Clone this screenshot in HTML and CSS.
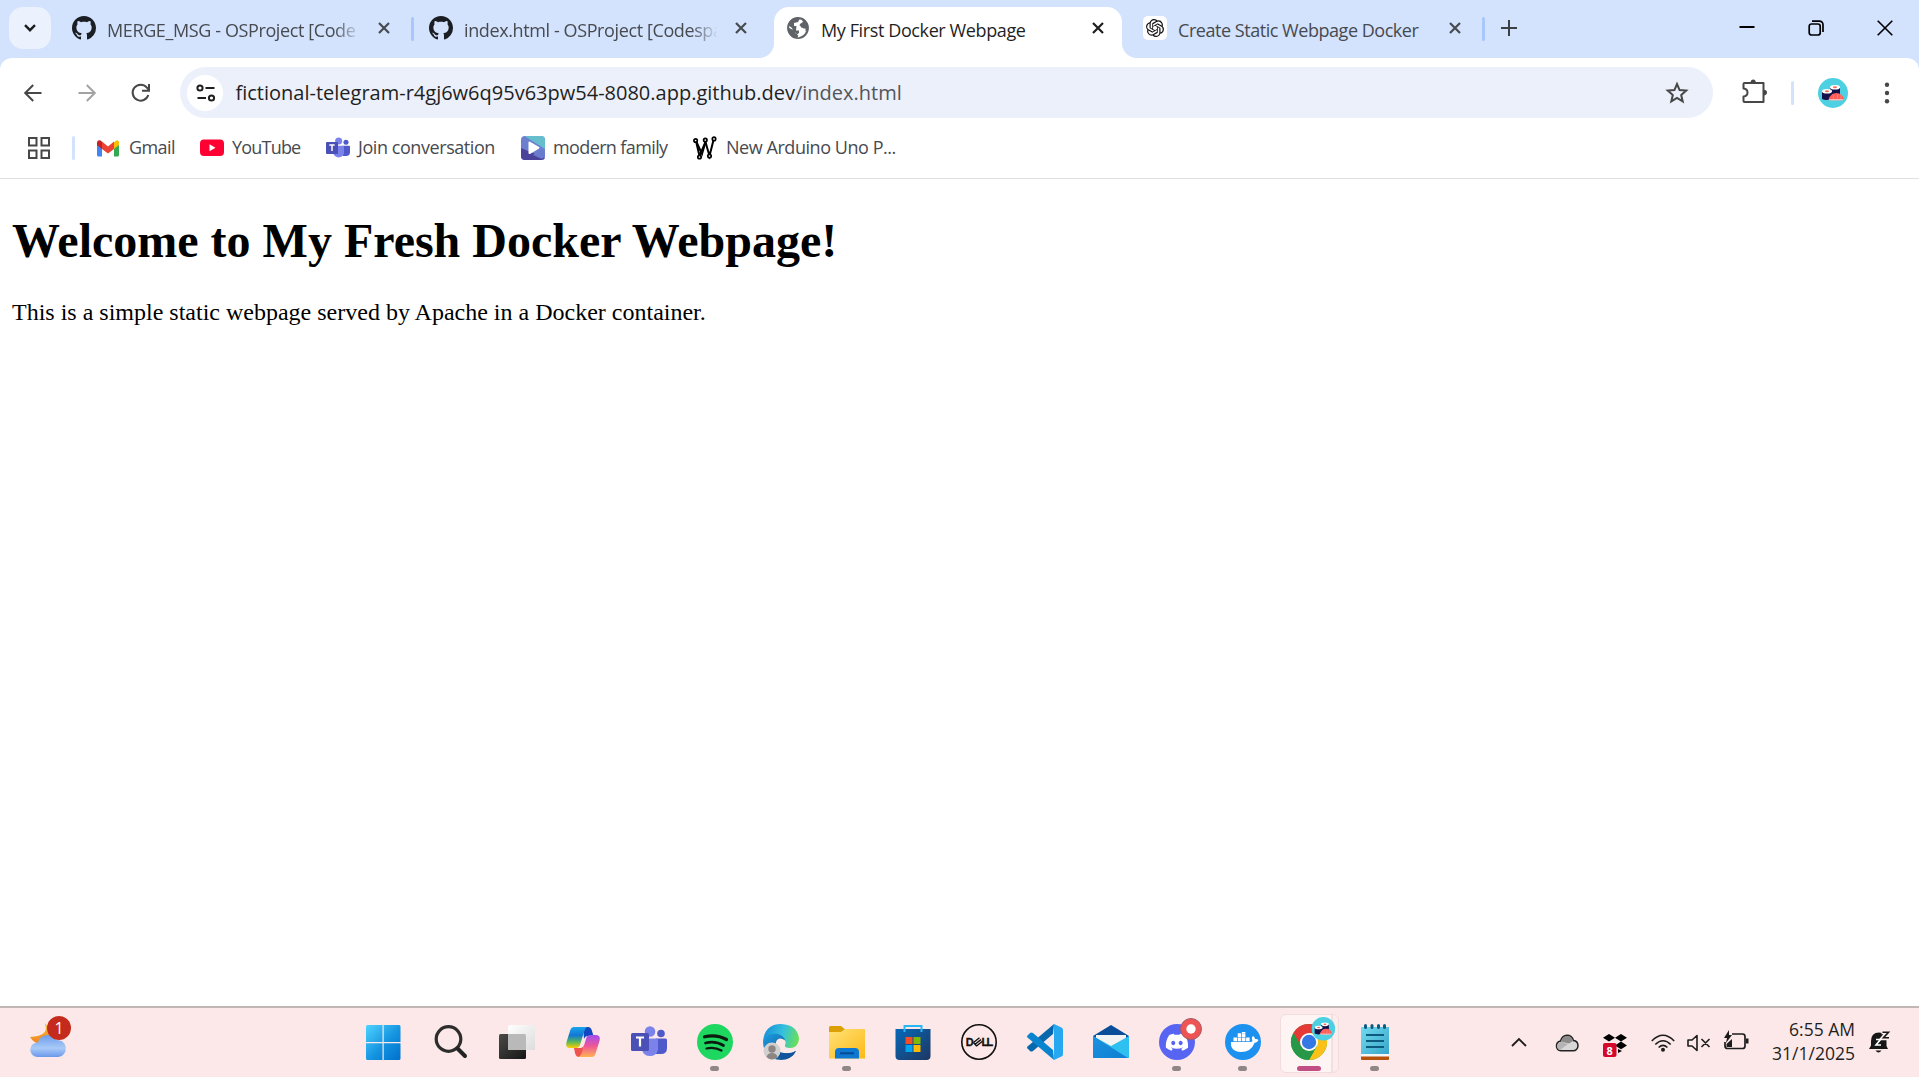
FILE: index.html
```html
<!DOCTYPE html>
<html lang="en">
<head>
<meta charset="utf-8">
<title>My First Docker Webpage</title>
<link rel="stylesheet" href="styles.css">
</head>
<body>
<svg class="defs" width="0" height="0">
  <defs>
    <symbol id="github" viewBox="0 0 16 16"><path fill="#1b1f24" d="M8 0C3.58 0 0 3.58 0 8c0 3.54 2.29 6.53 5.47 7.59.4.07.55-.17.55-.38 0-.19-.01-.82-.01-1.49-2.01.37-2.53-.49-2.69-.94-.09-.23-.48-.94-.82-1.13-.28-.15-.68-.52-.01-.53.63-.01 1.08.58 1.23.82.72 1.21 1.87.87 2.33.66.07-.52.28-.87.51-1.07-1.78-.2-3.64-.89-3.64-3.95 0-.87.31-1.59.82-2.15-.08-.2-.36-1.02.08-2.12 0 0 .67-.21 2.2.82.64-.18 1.32-.27 2-.27s1.36.09 2 .27c1.53-1.04 2.2-.82 2.2-.82.44 1.1.16 1.92.08 2.12.51.56.82 1.27.82 2.15 0 3.07-1.87 3.75-3.65 3.95.29.25.54.73.54 1.48 0 1.07-.01 1.93-.01 2.2 0 .21.15.46.55.38A8.01 8.01 0 0 0 16 8c0-4.42-3.58-8-8-8z"/></symbol>
    <symbol id="close" viewBox="0 0 12 12"><path d="M1 1l10 10M11 1L1 11" fill="none" stroke="currentColor" stroke-width="2.2"/></symbol>
    <symbol id="teams" viewBox="0 0 36 32">
      <circle cx="19" cy="5.5" r="5.3" fill="#7b83eb"/><circle cx="30" cy="7.5" r="3.8" fill="#5059c9"/>
      <path fill="#5059c9" d="M25 12.5h9.5q1.500 0 1.500 1.500v8q0 6-6 6h-5z"/>
      <path fill="#7b83eb" d="M11 12.500h14.500q1.500 0 1.500 1.500v10a8.300 8.300 0 0 1-16 0z"/>
      <rect y="7" width="18" height="18" rx="1.500" fill="#4a50b5"/>
      <path d="M5 11.500h8M9 11.500v9" stroke="#fff" stroke-width="2.200" fill="none"/>
    </symbol>
    <symbol id="sushi" viewBox="0 0 30 30">
      <circle cx="15" cy="15" r="15" fill="#4dd0e1"/>
      <path d="M12 9v7h10V9z" fill="#14104a"/><ellipse cx="17" cy="9.300" rx="5" ry="2.300" fill="#fff"/><ellipse cx="17" cy="9.300" rx="2" ry="1" fill="#f26a52"/>
      <path d="M4 13v8q4 2 10 0v-8z" fill="#14104a"/><ellipse cx="9" cy="13.300" rx="5" ry="2.300" fill="#fff"/><ellipse cx="9" cy="13.300" rx="2" ry="1" fill="#f26a52"/>
      <path d="M10.500 21.500q2-6.500 8-6.500 6 0 7.500 6.500z" fill="#ff5a55"/><path d="M10.500 21h15.500q-1 1.600-4 1.600h-8q-3 0-3.500-1.600z" fill="#fbb5b0"/><path d="M15 21l1-4M19 21l1-5M23 21v-4" stroke="#ff8b84" stroke-width=".8"/>
    </symbol>
    <linearGradient id="gWin" x1="0" y1="0" x2="1" y2="1"><stop offset="0" stop-color="#4fd3ff"/><stop offset=".55" stop-color="#1493e0"/><stop offset="1" stop-color="#0070cc"/></linearGradient>
    <linearGradient id="gCloud" x1="0" y1="0" x2="0" y2="1"><stop offset="0" stop-color="#6f9deb"/><stop offset=".6" stop-color="#a8caf8"/><stop offset="1" stop-color="#6a98ec"/></linearGradient>
    <linearGradient id="gMoon" x1="0" y1="0" x2="0" y2="1"><stop offset="0" stop-color="#f6c338"/><stop offset="1" stop-color="#ee8120"/></linearGradient>
    <linearGradient id="gDark" x1="0" y1="0" x2="1" y2="1"><stop offset="0" stop-color="#4b4a49"/><stop offset="1" stop-color="#161616"/></linearGradient>
    <linearGradient id="gLight" x1="0" y1="0" x2="1" y2="1"><stop offset="0" stop-color="#fff"/><stop offset="1" stop-color="#dcdcdc"/></linearGradient>
    <linearGradient id="gCopA" x1="0" y1="0" x2="0" y2="1"><stop offset="0" stop-color="#18a5ec"/><stop offset=".4" stop-color="#1377d4"/><stop offset=".7" stop-color="#55b65d"/><stop offset="1" stop-color="#ffd000"/></linearGradient>
    <linearGradient id="gCopB" x1="0" y1="0" x2="0" y2="1"><stop offset="0" stop-color="#a04ef0"/><stop offset=".5" stop-color="#ef5797"/><stop offset="1" stop-color="#ffb350"/></linearGradient>
    <linearGradient id="gEdgeTop" x1="0" y1=".3" x2="1" y2=".5"><stop offset="0" stop-color="#168fd8"/><stop offset=".55" stop-color="#35c1de"/><stop offset="1" stop-color="#69e057"/></linearGradient>
    <linearGradient id="gEdgeLow" x1="0" y1="0" x2="1" y2="1"><stop offset="0" stop-color="#1b9de2"/><stop offset="1" stop-color="#114a8b"/></linearGradient>
    <linearGradient id="gFolder" x1="0" y1="0" x2="1" y2="1"><stop offset="0" stop-color="#ffe27a"/><stop offset="1" stop-color="#fdb913"/></linearGradient>
    <linearGradient id="gStore" x1="0" y1="0" x2="1" y2="1"><stop offset="0" stop-color="#0769b9"/><stop offset="1" stop-color="#1e3661"/></linearGradient>
    <linearGradient id="gMail" x1="0" y1="0" x2="1" y2="1"><stop offset="0" stop-color="#1b92df"/><stop offset="1" stop-color="#0f7fd2"/></linearGradient>
    <linearGradient id="gNote" x1="0" y1="0" x2="1" y2="1"><stop offset="0" stop-color="#72daf0"/><stop offset="1" stop-color="#37a5c8"/></linearGradient>
  </defs>
</svg>

<header class="browser">
  <div class="tabstrip">
    <button class="tab-search"><svg width="12" height="8" viewBox="0 0 12 8"><path d="M1 1.200l5 5 5-5" fill="none" stroke="#1b1d21" stroke-width="2.400"/></svg></button>
    <div class="tab"><svg class="fav"><use href="#github"/></svg><span class="title clip">MERGE_MSG - OSProject [Code</span><svg class="x"><use href="#close"/></svg></div>
    <div class="tab"><svg class="fav"><use href="#github"/></svg><span class="title clip">index.html - OSProject [Codespa</span><svg class="x"><use href="#close"/></svg></div>
    <div class="tab active"><svg class="fav" viewBox="0 0 24 24"><circle cx="12" cy="12" r="9.900" fill="#fff" stroke="#5f6368" stroke-width="2"/><path fill="#5f6368" d="M2 9q1-6 9-7.500l3 1-2 3.500-4 1v3h6l2 3-3 6-2 3-1-5-3-2-1-3zM15 2l7 6v6l-4 2-1-4-4-1 1-3 3-2z"/><path fill="#fff" d="M10.500 9.500h3.500l2 3h3.500v3l-3 3-4 3-2.500-.5v-2l3-2v-2.500h-3z"/><path fill="#5f6368" d="M2.300 11.500l7 3.500v2l3 2.500-1 2.500q-8-1-9-8z"/></svg><span class="title">My First Docker Webpage</span><svg class="x"><use href="#close"/></svg></div>
    <div class="tab"><svg class="fav" viewBox="0 0 24 24"><rect width="24" height="24" rx="5" fill="#fff"/><g transform="translate(3 3) scale(.75)"><path fill="#111" d="M22.2819 9.8211a5.9847 5.9847 0 0 0-.5157-4.9108 6.0462 6.0462 0 0 0-6.5098-2.9A6.0651 6.0651 0 0 0 4.9807 4.1818a5.9847 5.9847 0 0 0-3.9977 2.9 6.0462 6.0462 0 0 0 .7427 7.0966 5.98 5.98 0 0 0 .511 4.9107 6.051 6.051 0 0 0 6.5146 2.9001A5.9847 5.9847 0 0 0 13.2599 24a6.0557 6.0557 0 0 0 5.7718-4.2058 5.9894 5.9894 0 0 0 3.9977-2.9001 6.0557 6.0557 0 0 0-.7475-7.0729zm-9.022 12.6081a4.4755 4.4755 0 0 1-2.8764-1.0408l.1419-.0804 4.7783-2.7582a.7948.7948 0 0 0 .3927-.6813v-6.7369l2.02 1.1686a.071.071 0 0 1 .038.052v5.5826a4.504 4.504 0 0 1-4.4945 4.4944zm-9.6607-4.1254a4.4708 4.4708 0 0 1-.5346-3.0137l.142.0852 4.783 2.7582a.7712.7712 0 0 0 .7806 0l5.8428-3.3685v2.3324a.0804.0804 0 0 1-.0332.0615L9.74 19.9502a4.4992 4.4992 0 0 1-6.1408-1.6464zM2.3408 7.8956a4.485 4.485 0 0 1 2.3655-1.9728V11.6a.7664.7664 0 0 0 .3879.6765l5.8144 3.3543-2.0201 1.1685a.0757.0757 0 0 1-.071 0l-4.8303-2.7865A4.504 4.504 0 0 1 2.3408 7.872zm16.5963 3.8558L13.1038 8.364 15.1192 7.2a.0757.0757 0 0 1 .071 0l4.8303 2.7913a4.4944 4.4944 0 0 1-.6765 8.1042v-5.6772a.79.79 0 0 0-.407-.667zm2.0107-3.0231l-.142-.0852-4.7735-2.7818a.7759.7759 0 0 0-.7854 0L9.409 9.2297V6.8974a.0662.0662 0 0 1 .0284-.0615l4.8303-2.7866a4.4992 4.4992 0 0 1 6.6802 4.66zM8.3065 12.863l-2.02-1.1638a.0804.0804 0 0 1-.038-.0567V6.0742a4.4992 4.4992 0 0 1 7.3757-3.4537l-.142.0805L8.704 5.459a.7948.7948 0 0 0-.3927.6813zm1.0976-2.3654l2.602-1.4998 2.6069 1.4998v2.9994l-2.5974 1.4997-2.6067-1.4997Z"/></g></svg><span class="title tight">Create Static Webpage Docker</span><svg class="x"><use href="#close"/></svg></div>
    <button class="new-tab"><svg width="16" height="16" viewBox="0 0 16 16"><path d="M8 0v16M0 8h16" stroke="#3c3f43" stroke-width="2"/></svg></button>
    <div class="window-controls">
      <svg width="16" height="16" viewBox="0 0 16 16"><path d="M.5 7h15" stroke="#000" stroke-width="2"/></svg>
      <svg width="16" height="16" viewBox="0 0 16 16"><g fill="none" stroke="#000" stroke-width="1.700"><rect x="1.200" y="4" width="11" height="11" rx="2.300"/><path d="M4 1.200h7.500a3.500 3.500 0 0 1 3.500 3.500V12"/></g></svg>
      <svg width="16" height="16" viewBox="0 0 16 16"><path d="M.7.700l14.600 14.600M15.300.700L.7 15.300" stroke="#000" stroke-width="1.600"/></svg>
    </div>
  </div>

  <div class="toolbar">
    <nav class="nav">
      <svg viewBox="0 0 18 18"><path d="M17.500 9H1.500M9.200 1L1.200 9l8 8" fill="none" stroke="#474747" stroke-width="2"/></svg>
      <svg viewBox="0 0 18 18"><path d="M.5 9h16M8.800 1l8 8-8 8" fill="none" stroke="#a3a3a3" stroke-width="2"/></svg>
      <svg viewBox="0 0 18 18"><path d="M16.300 11A8 8 0 1 1 14.700 3.400L17 6.200" fill="none" stroke="#474747" stroke-width="2"/><path d="M17 0v6.800h-7" fill="none" stroke="#474747" stroke-width="2"/></svg>
    </nav>
    <div class="omnibox">
      <span class="site-info"><svg width="20" height="18" viewBox="0 0 20 18"><g fill="none" stroke="#1f1f1f" stroke-width="2"><circle cx="4" cy="4" r="2.600"/><path d="M9.500 4H18.500M1.500 14H10"/><circle cx="15.500" cy="14" r="2.600"/></g></svg></span>
      <span class="url">fictional-telegram-r4gj6w6q95v63pw54-8080.app.github.dev<span class="path">/index.html</span></span>
      <svg class="star" width="24" height="24" viewBox="0 0 24 24"><path d="M12 3l2.600 6.100 6.600.5-5 4.400 1.500 6.400L12 17l-5.700 3.400L7.800 14l-5-4.400 6.600-.5z" fill="none" stroke="#474747" stroke-width="2"/></svg>
    </div>
    <svg class="puzzle" width="26" height="26" viewBox="0 0 26 26"><path d="M3.500 5h19v19h-19q-1 0-1-1v-4.500q4-.5 4-4t-4-4V6q0-1 1-1z" fill="none" stroke="#474747" stroke-width="2" stroke-linejoin="round"/><path fill="#474747" d="M9.500 5a2.700 3.500 0 0 1 5.400 0zM22.500 11.800a3.500 2.800 0 0 1 0 5.600z"/></svg>
    <i class="bar"></i>
    <svg class="avatar" width="30" height="30"><use href="#sushi"/></svg>
    <svg class="menu" width="6" height="22" viewBox="0 0 6 22"><g fill="#474747"><circle cx="3" cy="2.800" r="2.200"/><circle cx="3" cy="11" r="2.200"/><circle cx="3" cy="19.200" r="2.200"/></g></svg>
  </div>

  <div class="bookmarks">
    <svg class="apps" width="22" height="22" viewBox="0 0 22 22"><g fill="none" stroke="#474747" stroke-width="2"><path d="M1 1h7.500v7.500H1zM13.500 1H21v7.500h-7.500zM1 13.500h7.500V21H1zM13.500 13.500H21V21h-7.500z"/></g></svg>
    <i class="bar"></i>
    <a class="bm gmail"><svg viewBox="0 0 24 24"><path fill="#4285f4" d="M0 8v11q0 1.500 1.500 1.500H5V11z"/><path fill="#34a853" d="M22 8v11q0 1.500-1.500 1.500H17V11z"/><path fill="#fbbc04" d="M17 6.500l1.800-1.800Q21 3.500 22 6v3l-5 4z"/><path fill="#ea4335" d="M5 5.500l6 5 6-5V13l-6 4.500L5 13z"/><path fill="#c5221f" d="M0 9V6.500Q.5 3.500 3.500 4.500L5 5.700V13z"/></svg><span>Gmail</span></a>
    <a class="bm youtube"><svg viewBox="0 0 24 24"><rect y="3.500" width="24" height="16.500" rx="4" fill="#ff0033"/><path d="M9.500 8.300v7l6-3.500z" fill="#fff"/></svg><span>YouTube</span></a>
    <a class="bm join"><svg><use href="#teams"/></svg><span>Join conversation</span></a>
    <a class="bm modern"><svg viewBox="0 0 24 24"><rect width="24" height="24" rx="4" fill="#6d80d0"/><path d="M4 0h16q4 0 4 4v9L5 1z" fill="#66bdcb"/><path d="M0 12l24 10q-1 2-4 2H4q-4 0-4-4z" fill="#4b429b"/><path d="M12 19l8-6 4 4v3l-3 3z" fill="#6a7bcd"/><path d="M7.500 6.500q0-1.500 1.500-.8l9 5.300q1.200.8 0 1.600l-9 5.300q-1.500.7-1.500-.8z" fill="#fff"/></svg><span>modern family</span></a>
    <a class="bm arduino"><svg viewBox="0 0 24 24"><g fill="none" stroke="#000" stroke-width="2"><path d="M3 5l3.500 15L12.500 6l4 14L20.500 4"/><path d="M3 5l6 13 3.500-12"/></g><g fill="#fff" stroke="#000" stroke-width="1.700"><circle cx="2.600" cy="4.500" r="1.700"/><circle cx="12.300" cy="4" r="1.700"/><circle cx="21" cy="2.900" r="1.700"/><circle cx="6.500" cy="21" r="1.700"/><circle cx="16.500" cy="20" r="1.700"/></g></svg><span>New Arduino Uno P...</span></a>
  </div>
</header>

<main class="page">
  <h1>Welcome to My Fresh Docker Webpage!</h1>
  <p>This is a simple static webpage served by Apache in a Docker container.</p>
</main>

<footer class="taskbar">
  <div class="weather"><svg width="44" height="46" viewBox="0 0 44 46"><path d="M14.500 9q6 13-14.500 14 4 7 12 7l8-8q0-9-5.500-13z" fill="url(#gMoon)"/><path d="M7 43a7 7 0 0 1 1-14.500 9.800 9.800 0 0 1 18-2.500 8.500 8.500 0 1 1 2.500 17z" fill="url(#gCloud)"/></svg><b class="badge">1</b></div>
  <div class="apps-row">
    <span class="app start"><svg viewBox="0 0 36 36"><path fill="url(#gWin)" d="M2.500 1H17.500v17H1V2.500Q1 1 2.500 1zM18.700 1H34q1.500 0 1.500 1.500V18H18.700zM1 19.200h16.500V36h-15Q1 36 1 34.500zM18.700 19.200h16.800V34.500q0 1.500-1.500 1.500H18.700z"/></svg></span>
    <span class="app"><svg viewBox="0 0 36 36"><circle cx="15.500" cy="15" r="12.300" fill="none" stroke="#2d2d2d" stroke-width="3.200"/><path d="M24.500 24.500l7.500 7.500" stroke="#242424" stroke-width="4" stroke-linecap="round"/></svg></span>
    <span class="app"><svg viewBox="0 0 36 36"><rect y="10" width="27" height="25" rx="1.500" fill="url(#gDark)"/><rect x="9" y="1" width="27" height="25" rx="1.500" fill="url(#gLight)"/><path d="M9 10h16.500q1.500 0 1.500 1.500V26H10.500Q9 26 9 24.500z" fill="#b9b9b9"/></svg></span>
    <span class="app"><svg viewBox="0 0 36 36"><path d="M18 3h5q3 0 4 4l1.500 5H23q-3 0-4 3z" fill="#1149c2"/><path d="M9 3h13q-2 1-3 5l-4 13q-1 3-4 3H5q-5 0-3.500-6L5 7q1-4 4-4z" fill="url(#gCopA)"/><path d="M9 24h7q2 0 3-3l-2 12h-3q-3 0-4-4z" fill="#ef5350"/><path d="M27 33H13q3-1 4-5l4-13q1-4 4-4h6q5 0 3.500 6L31 28q-1 5-4 5z" fill="url(#gCopB)"/></svg></span>
    <span class="app"><svg viewBox="0 0 36 32"><use href="#teams"/></svg></span>
    <span class="app run"><svg viewBox="0 0 36 36"><circle cx="18" cy="18" r="18" fill="#1ed760"/><g fill="none" stroke="#0d1a10" stroke-linecap="round"><path d="M7.500 12.800q12-2.800 22 2.700" stroke-width="3.200"/><path d="M8.500 19q10-2.500 18 2.500" stroke-width="2.700"/><path d="M9.500 24.500q8-2 15 2" stroke-width="2.200"/></g></svg></span>
    <span class="app"><svg viewBox="0 0 36 36"><path d="M0 17Q2 0 18 0q17 1 18 15-1 9-9 9-6 0-5-3 2-4-2-6Q12 8 0 17z" fill="url(#gEdgeTop)"/><path d="M0 17q5-9 15-7 6 2 7 6-7-4-9 2-1 11 8 11 7 1 12-2-5 9-15 9Q0 35 0 17z" fill="url(#gEdgeLow)"/><path d="M13 18q-3 11 8 11 7 1 12-2-4 8-13 8-10-3-9-12z" fill="#11539d"/><circle cx="9" cy="27" r="8.500" fill="#d2d0ce"/><circle cx="9" cy="25" r="3.700" fill="#8b8683"/><path d="M3.500 33q1-4 5.500-4t5.500 4q-5.500 5-11 0z" fill="#8b8683"/></svg></span>
    <span class="app run"><svg viewBox="0 0 36 36"><path d="M0 3.500Q0 2 1.500 2H12l3.500 3H34q2 0 2 2v5H0z" fill="#dda003"/><path d="M0 8h12l4-3h18.500Q36 5 36 6.500V34.500H0z" fill="url(#gFolder)"/><path d="M6 34.500V28q0-4 4-4h16q4 0 4 4v6.500z" fill="#0f78d0"/><path d="M11 29.300h14" stroke="#074a94" stroke-width="2"/></svg></span>
    <span class="app"><svg viewBox="0 0 36 36"><path d="M.5 5h35v27q0 4-4 4h-27q-4 0-4-4z" fill="url(#gStore)"/><path d="M9.500 8V2h17v6" fill="none" stroke="#28b8f5" stroke-width="2"/><path fill="#f25022" d="M10.500 13h7v7h-7z"/><path fill="#7fba00" d="M18.500 13h7v7h-7z"/><path fill="#00a4ef" d="M10.500 21h7v7h-7z"/><path fill="#ffb900" d="M18.500 21h7v7h-7z"/></svg></span>
    <span class="app"><svg viewBox="0 0 36 36"><circle cx="18" cy="18" r="17.200" fill="none" stroke="#111" stroke-width="1.600"/><g class="dell"><text x="4.800" y="22.200">D</text><text x="20.500" y="22.200">L</text><text x="25.600" y="22.200">L</text><path d="M12.500 18.500l6-4.700M14 20.300l6-4.700M15.500 22l6-4.700M12.500 18.500l3.300 3.700" stroke="#111" stroke-width="1.400" fill="none"/></g></svg></span>
    <span class="app"><svg viewBox="0 0 36 36"><path d="M27 0l-1 10L6 27q-2 1-3 0l-2.500-2.500q-1-1 0-2z" fill="#0868ad"/><path d="M27 36l-1-10L6 9Q4 8 3 9L.5 11.500q-1 1 0 2z" fill="#0b84d0"/><path d="M27 0l7.500 3.500Q36 4 36 6v24q0 2-1.500 2.500L27 36z" fill="#29a8f2"/></svg></span>
    <span class="app"><svg viewBox="0 0 36 36"><path d="M0 12L18 1l18 11v5H0z" fill="#0a4e9a"/><path d="M3 11h30v12H3z" fill="#f3f3f3"/><path d="M0 12l18 10 18-10v22H0z" fill="#2fc0f2"/><path d="M0 12l35 22H0z" fill="url(#gMail)"/></svg></span>
    <span class="app run"><svg viewBox="0 0 36 36"><circle cx="18" cy="18" r="18" fill="#5865f2"/><g transform="translate(6.800 7) scale(.93)"><path fill="#fff" d="M20.317 4.3698a19.7913 19.7913 0 00-4.8851-1.5152.0741.0741 0 00-.0785.0371c-.211.3753-.4447.8648-.6083 1.2495-1.8447-.2762-3.68-.2762-5.4868 0-.1636-.3933-.4058-.8742-.6177-1.2495a.077.077 0 00-.0785-.037 19.7363 19.7363 0 00-4.8852 1.515.0699.0699 0 00-.0321.0277C.5334 9.0458-.319 13.5799.0992 18.0578a.0824.0824 0 00.0312.0561c2.0528 1.5076 4.0413 2.4228 5.9929 3.0294a.0777.0777 0 00.0842-.0276c.4616-.6304.8731-1.2952 1.226-1.9942a.076.076 0 00-.0416-.1057c-.6528-.2476-1.2743-.5495-1.8722-.8923a.077.077 0 01-.0076-.1277c.1258-.0943.2517-.1923.3718-.2914a.0743.0743 0 01.0776-.0105c3.9278 1.7933 8.18 1.7933 12.0614 0a.0739.0739 0 01.0785.0095c.1202.099.246.1981.3728.2924a.077.077 0 01-.0066.1276 12.2986 12.2986 0 01-1.873.8914.0766.0766 0 00-.0407.1067c.3604.698.7719 1.3628 1.225 1.9932a.076.076 0 00.0842.0286c1.961-.6067 3.9495-1.5219 6.0023-3.0294a.077.077 0 00.0313-.0552c.5004-5.177-.8382-9.6739-3.5485-13.6604a.061.061 0 00-.0312-.0286zM8.02 15.3312c-1.1825 0-2.1569-1.0857-2.1569-2.419 0-1.3332.9555-2.4189 2.157-2.4189 1.2108 0 2.1757 1.0952 2.1568 2.419 0 1.3332-.9555 2.4189-2.1569 2.4189zm7.9748 0c-1.1825 0-2.1569-1.0857-2.1569-2.419 0-1.3332.9554-2.4189 2.1569-2.4189 1.2108 0 2.1757 1.0952 2.1568 2.419 0 1.3332-.946 2.4189-2.1568 2.4189Z"/></g><circle cx="32" cy="5" r="10.500" fill="#ef5455" stroke="#a45b63" stroke-width="1"/><circle cx="32" cy="5" r="4.700" fill="#fff"/></svg></span>
    <span class="app run"><svg viewBox="0 0 36 36"><circle cx="18" cy="18" r="18" fill="#1d91ef"/><path fill="#fff" d="M6 18h19q2.500 0 2.500-1-1.500-3 .5-5 2 1 2 3 2-.5 3.500 1-1.500 3-4 3Q26 28 16 28 5 27.500 6 18zM8.500 13.500H12v3.700H8.500zM12.700 13.500h3.500v3.700h-3.500zM16.900 13.500h3.500v3.700h-3.500zM21.100 13.500h3.500v3.700h-3.500zM12.700 9.300h3.500V13h-3.500zM16.900 9.300h3.500V13h-3.500zM16.900 8h3.500v1h-3.500z"/></svg></span>
    <span class="app current"><svg viewBox="0 0 36 36"><circle cx="18" cy="18" r="18" fill="#34a853"/><path d="M2.400 9A18 18 0 0 1 33.600 9L18 10z" fill="#e53935"/><path d="M2.400 9L10.200 22.500 18 18V9z" fill="#e53935"/><path d="M33.600 9A18 18 0 0 1 18 36l7.800-13.500L18 9z" fill="#fbc116"/><path d="M2.400 9l7.800 13.500L18 27h5l-5 9A18 18 0 0 1 2.400 9z" fill="#279847"/><circle cx="18" cy="18" r="9" fill="#fff"/><circle cx="18" cy="18" r="7.200" fill="#3478e5"/><g transform="translate(20.500 -7) scale(.79)"><use href="#sushi" width="30" height="30"/></g></svg></span>
    <span class="app run"><svg viewBox="0 0 36 36"><path d="M4 3h28v29H4z" fill="url(#gNote)"/><path d="M4 30h28v3H4z" fill="#f6f6f6"/><path d="M4 32.500h28V35q0 1-1 1H5q-1 0-1-1z" fill="#b45309"/><path d="M9 11h18M9 17h18M9 23h18" stroke="#0c5c80" stroke-width="1.800"/><path d="M8.500 1.500v2M15 1.500v2M21.500 1.500v2M27.500 1.500v2" stroke="#0c5c80" stroke-width="3" stroke-linecap="round"/></svg></span>
  </div>
  <div class="tray">
    <svg class="chev" width="16" height="9" viewBox="0 0 16 9"><path d="M1 8l7-7 7 7" fill="none" stroke="#1c1c1c" stroke-width="1.800"/></svg>
    <svg class="cloud" width="24" height="18" viewBox="0 0 24 18"><path d="M6 16.800a4.900 4.900 0 0 1-.5-9.700Q7 1.500 12 1.200q5 0 6.500 5.300 4.500.5 4.500 5.500-.5 4.800-5 4.800z" fill="#d9d7d7" stroke="#222" stroke-width="1.500"/><path d="M6 7.500q2-5.700 6.200-5.600Q17 2 18 7l-4 2.500Z" fill="#8d8a8a"/><path d="M2 12q1-4 5-4l6 2-8 6q-3-1-3-4z" fill="#b5b3b3"/></svg>
    <svg class="dropbox" width="24" height="24" viewBox="0 0 24 24"><path d="M6 1l6 3.800-6 3.800L0 4.800zM18 1l6 3.800-6 3.800-6-3.800zM18 8.600l6 3.800-6 3.800-6-3.800zM15 16l4 2-4 2z" fill="#000"/><rect y="10" width="13.500" height="14" rx="2" fill="#d4082b"/><text x="6.700" y="21.500" class="num">8</text></svg>
    <svg class="wifi" width="24" height="18" viewBox="0 0 24 18"><g fill="none" stroke="#1c1c1c" stroke-width="1.600"><path d="M.8 7Q12-4.500 23.200 7"/><path d="M4.300 10.500q7.700-7.500 15.400 0"/><path d="M7.600 13.500q4.400-4.200 8.800 0"/></g><circle cx="12" cy="15.800" r="2" fill="#1c1c1c"/></svg>
    <svg class="sound" width="24" height="18" viewBox="0 0 24 18"><path d="M1 6h4l5-4.500v15L5 12H1zM14.500 5l8 8M22.500 5l-8 8" fill="none" stroke="#1c1c1c" stroke-width="1.600" stroke-linejoin="round"/></svg>
    <svg class="battery" width="25" height="20" viewBox="0 0 25 20"><path d="M8 4h10.500q2.500 0 2.500 2.500V16q0 2.500-2.500 2.500h-15Q1 18.500 1 16v-4" fill="none" stroke="#1c1c1c" stroke-width="1.700"/><path d="M5 0L0 8h3l-1 5 6-8H5zM2.500 14L8 9v8H2.500zM22 8.500h2.500v5H22z" fill="#1c1c1c"/></svg>
    <div class="clock"><span>6:55 AM</span><span class="date">31/1/2025</span></div>
    <svg class="bell" width="22" height="24" viewBox="0 0 22 24"><path d="M10 1.500q7.500 0 7.500 8V15l1.500 3H0l2-3.500V10q0-8.500 8-8.500zM6.500 19.500h6q-3 4-6 0z" fill="#161616"/><path d="M12.500 1.200h6l-5 6h6.500" fill="none" stroke="#fce9e9" stroke-width="4"/><path d="M13.500 1.200h6l-5 5.500h5.500" fill="none" stroke="#161616" stroke-width="1.600"/><path d="M7 8.500h4.500L7 14h5" fill="none" stroke="#fff" stroke-width="1.600"/></svg>
  </div>
</footer>
</body>
</html>
```
FILE: styles.css
```css
* { box-sizing: border-box; }
html, body { margin: 0; height: 100%; overflow: hidden; }
body { display: flex; flex-direction: column; background: #fff; font-family: "Open Sans", "Noto Sans", sans-serif; font-size: 18px; color: #1f1f1f; }
svg { display: block; flex: none; overflow: visible; }
button { border: 0; padding: 0; background: none; display: flex; align-items: center; justify-content: center; flex: none; }
.defs { position: absolute; }

.browser { background: #d3e2fd; flex: none; height: 179px; }
.tabstrip { display: flex; height: 58px; }
.tab-search { width: 42px; height: 42px; margin: 7px 6px 0 9px; border-radius: 14px; background: #ebf1fd; }
.tab { position: relative; width: 357px; height: 58px; flex: none; display: flex; align-items: center; padding: 0 0 2px 15px; color: #474a4f; }
.tab:not(.active)::after { content: ""; position: absolute; right: 0; top: 17px; width: 3px; height: 24px; border-radius: 1.5px; background: #a8c7fa; }
.tab:nth-child(3)::after { display: none; }
.fav { width: 24px; height: 24px; }
.title { width: 253px; margin-left: 11px; white-space: nowrap; line-height: 26px; padding-top: 3px; letter-spacing: -.39px; }
.tight { letter-spacing: -.46px; }
.clip { -webkit-mask-image: linear-gradient(90deg, #000 227px, transparent 254px); mask-image: linear-gradient(90deg, #000 227px, transparent 254px); }
.x { width: 12px; height: 12px; margin-left: 18px; }
.tab.active { color: #1f1f1f; }
.tab.active::before { content: ""; position: absolute; left: 3px; top: 7px; width: 348px; height: 51px; border-radius: 15px 15px 0 0; background: #fff; }
.tab.active::after { content: ""; position: absolute; left: -12px; bottom: 0; width: 378px; height: 15px; background: radial-gradient(circle at 0 0, transparent 14.5px, #fff 15.500px) 0 0 / 15px 15px no-repeat, radial-gradient(circle at 15px 0, transparent 14.500px, #fff 15.500px) 363px 0 / 15px 15px no-repeat; }
.tab.active > * { position: relative; z-index: 1; }
.new-tab { width: 48px; height: 56px; }
.window-controls { margin-left: auto; display: flex; gap: 53px; padding: 20px 26px 0 0; }

.toolbar { display: flex; align-items: center; height: 69px; background: #fff; border-radius: 12px 12px 0 0; }
.nav { display: flex; gap: 36px; width: 180px; padding-left: 24px; }
.nav svg { width: 18px; height: 18px; }
.omnibox { display: flex; align-items: center; width: 1533px; height: 51px; border-radius: 26px; background: #ecf0fa; padding: 0 24px 0 7px; }
.site-info { width: 36px; height: 36px; border-radius: 50%; background: #fff; display: flex; align-items: center; justify-content: center; padding-left: 1px; }
.url { margin-left: 12.5px; font-size: 20px; white-space: nowrap; }
.path { color: #52555a; }
.star { margin-left: auto; }
.puzzle { margin: -3px 0 0 28px; }
.bar { width: 3px; height: 24px; border-radius: 1.5px; background: #d3e2fd; flex: none; }
.toolbar .bar { margin-left: 24px; }
.avatar { margin-left: 24px; }
.menu { margin-left: 36px; }

.bookmarks { display: flex; align-items: center; height: 52px; padding: 0 0 9px 28px; background: #fff; border-bottom: 1px solid #dfe0e2; }
.bookmarks .bar { margin: 0 22px; }
.bm { display: flex; align-items: center; gap: 8px; flex: none; color: #474a4f; white-space: nowrap; }
.bm svg { width: 24px; height: 24px; }
.bm span { line-height: 24px; padding-bottom: 2px; }
.gmail { width: 103px; letter-spacing: -.6px; }
.youtube { width: 126px; letter-spacing: -.8px; }
.join { width: 195px; letter-spacing: -.43px; }
.modern { width: 172px; letter-spacing: -.62px; }
.arduino { gap: 9px; letter-spacing: -.45px; }

.page { flex: 1; padding: 0 12px; font-family: "Liberation Serif", "Times New Roman", serif; font-size: 24px; color: #000; overflow: hidden; }
.page h1 { margin: 34px 0 30px; font-size: 48px; line-height: 56px; }
.page p { margin: 0; line-height: 27px; }

.taskbar { position: relative; flex: none; display: flex; height: 71px; border-top: 2px solid #c2b5b6; background: #fce8e8; }
.weather { position: relative; width: 350px; padding: 6px 0 0 30px; }
.badge { position: absolute; left: 47px; top: 8px; width: 24px; height: 24px; border-radius: 50%; background: #c42b1c; color: #fff; font-size: 16px; font-weight: 400; line-height: 24px; text-align: center; }
.apps-row { display: flex; }
.app { position: relative; display: flex; justify-content: center; width: 66px; padding-top: 16px; }
.app.start { width: 68px; padding-right: 2px; }
.app svg { position: relative; width: 36px; height: 36px; }
.run::after, .current::after { content: ""; position: absolute; left: 28px; bottom: 6px; width: 9px; height: 5px; border-radius: 2.500px; background: #908686; }
.current::before { content: ""; position: absolute; left: 4px; top: 6px; width: 57px; height: 57px; border-radius: 6px; background: linear-gradient(90deg, #fdf4f3 50px, #f2dfdf 50px, #f2dfdf 52px, #fcedec 52px); border: 1px solid #f1dddd; }
.current::after { left: 21px; width: 24px; background: #c24f83; }
.dell { font: 700 11px "Liberation Sans", Arial, sans-serif; fill: #111; stroke: #111; stroke-width: .3px; }
.tray { display: flex; align-items: center; margin-left: auto; padding: 0 28px 0 0; }
.cloud { margin-left: 28px; }
.dropbox { margin: 4px 0 0 24px; }
.num { font: 700 11px "Open Sans", sans-serif; fill: #fff; text-anchor: middle; }
.wifi { margin-left: 24px; }
.sound { margin-left: 12px; }
.battery { margin: -5px 0 0 13px; }
.clock { display: flex; flex-direction: column; align-items: flex-end; width: 106px; line-height: 24px; font-size: 17.500px; padding-bottom: 3px; }
.bell { margin-left: 14px; }
```
